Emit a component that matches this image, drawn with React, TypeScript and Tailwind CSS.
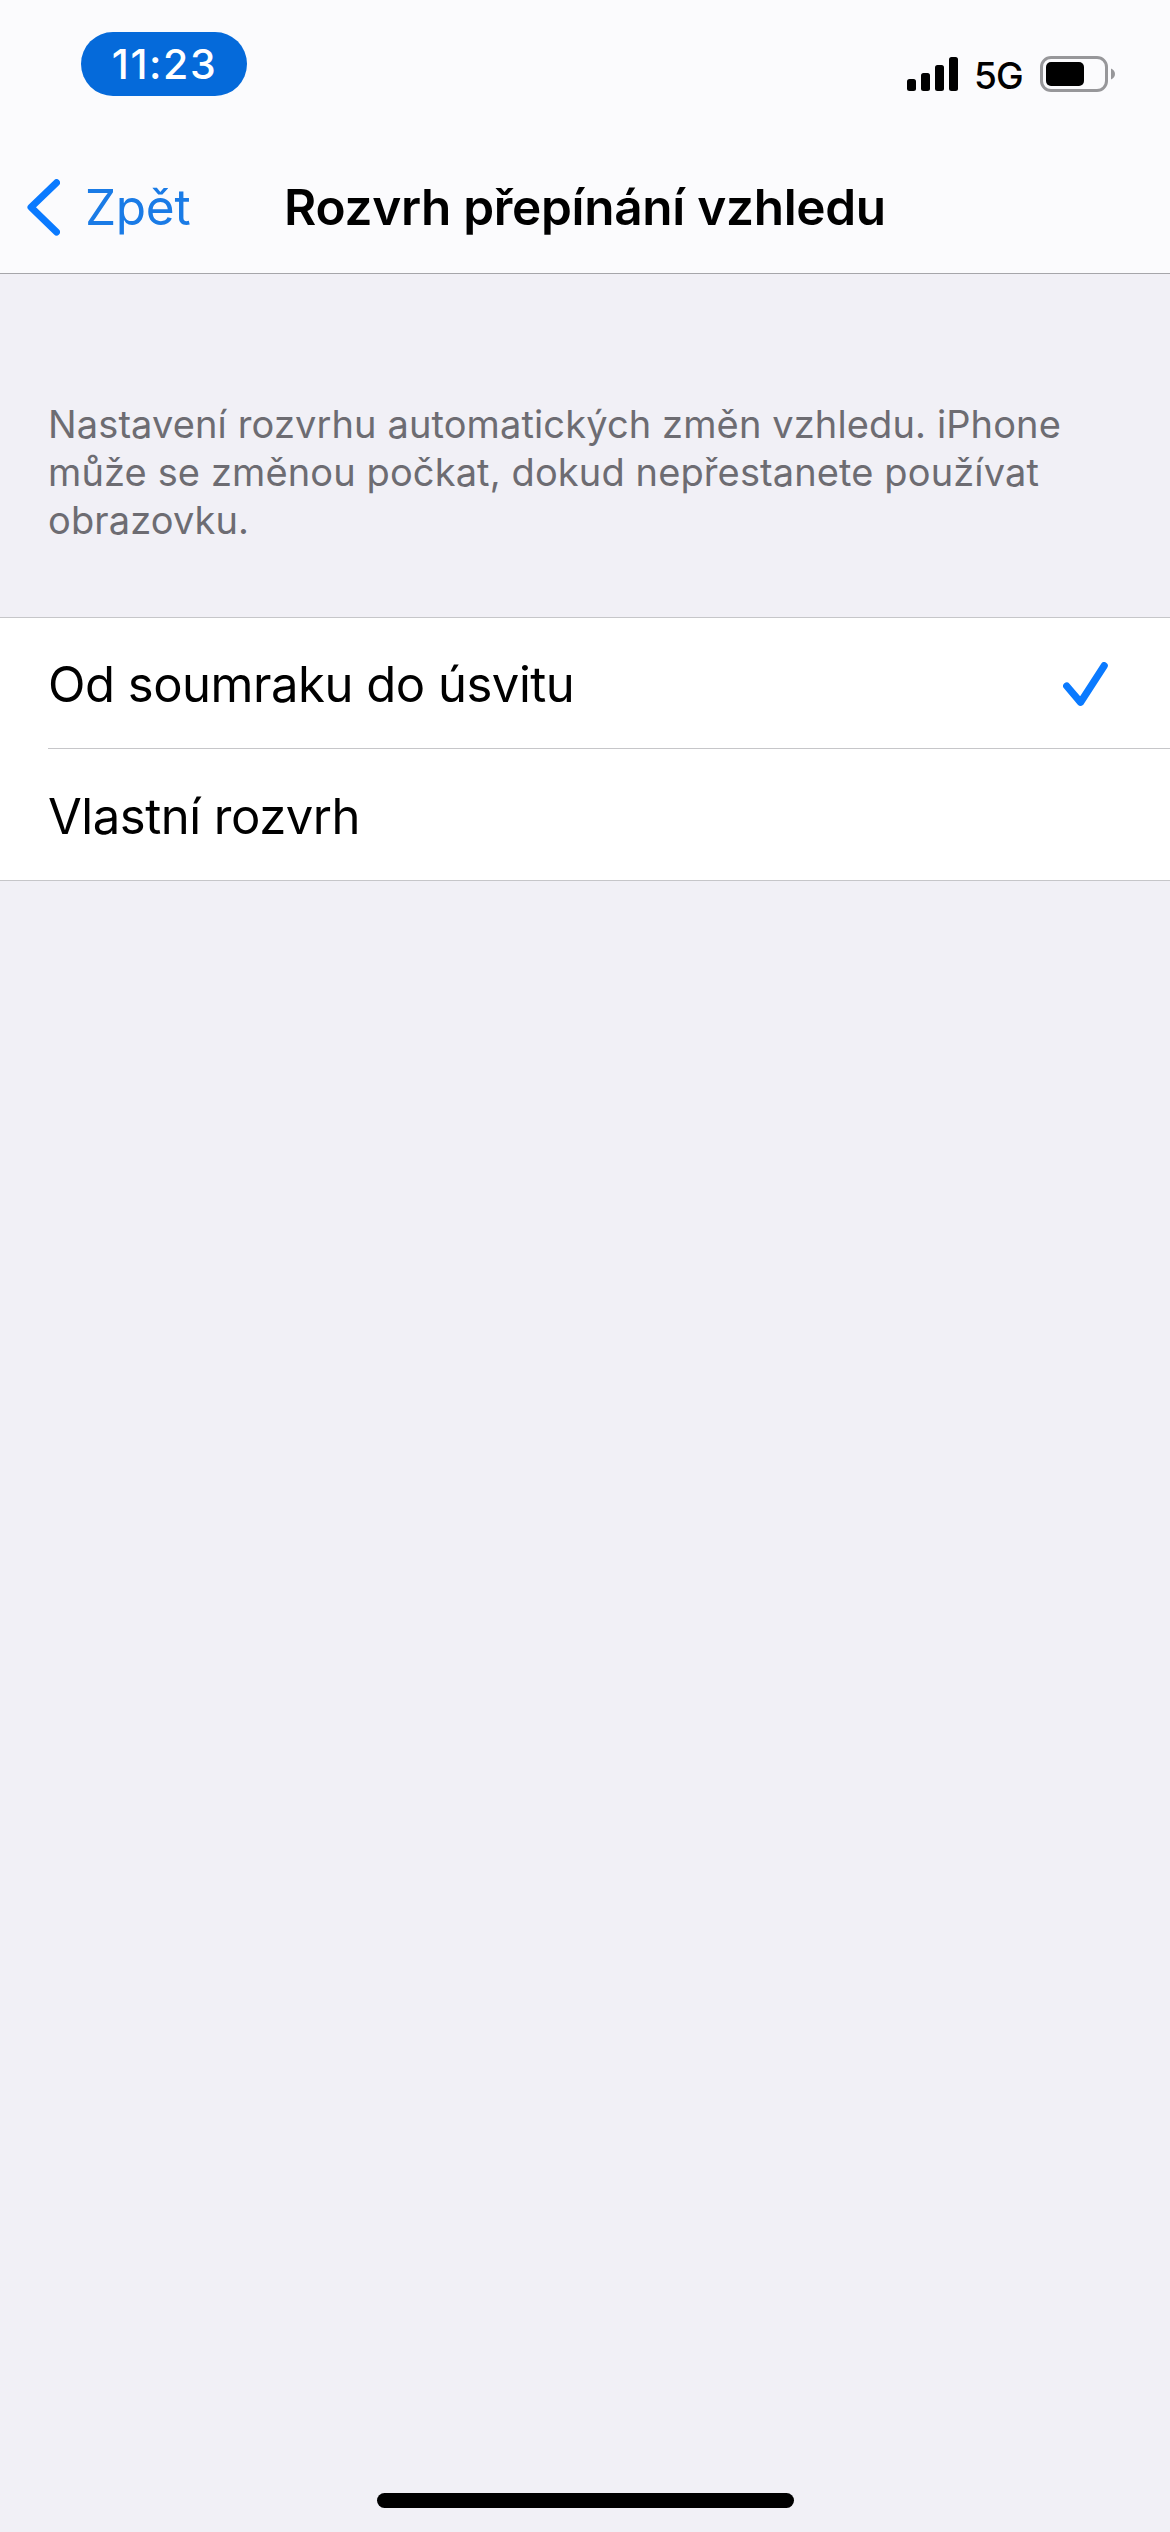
import { useState } from 'react'

const options = [
  { id: 'auto', label: 'Od soumraku do úsvitu' },
  { id: 'custom', label: 'Vlastní rozvrh' },
]

/* Signal, network and battery */
function StatusIcons() {
  return (
    <div className="flex h-9 items-center mt-14 mr-[55px]">
      <svg width="51" height="34" viewBox="0 0 51 34" fill="#000">
        <rect x="0" y="22" width="9" height="12" rx="2.5" />
        <rect x="14" y="16" width="9" height="18" rx="2.5" />
        <rect x="28" y="8" width="9" height="26" rx="2.5" />
        <rect x="42" y="0" width="9" height="34" rx="2.5" />
      </svg>
      <span className="ml-[16px] w-[50px] pt-[3px] text-[37px] leading-[45px] font-medium tracking-[-0.9px]">
        5G
      </span>
      <svg className="ml-[16px]" width="75" height="36" viewBox="0 0 75 36">
        <rect x="1.5" y="1.5" width="65" height="33" rx="9.5" fill="none" stroke="#97979a" strokeWidth="3" />
        <rect x="6" y="6" width="38" height="24" rx="5" fill="#000" />
        <path d="M71 12.5C73.500 13.500 75 15.500 75 18C75 20.500 73.500 22.500 71 23.500Z" fill="#97979a" />
      </svg>
    </div>
  )
}

function StatusBar() {
  return (
    <div className="flex h-[141px] items-start justify-between">
      <div className="mt-8 ml-[81px] flex h-16 w-[166px] justify-center rounded-full bg-[#056ada]">
        <span className="pl-[1px] text-[41px] leading-[64px] font-medium tracking-[1.6px] text-white">
          11:23
        </span>
      </div>
      <StatusIcons />
    </div>
  )
}

function NavBar() {
  return (
    <div className="grid h-[132px] grid-cols-[1fr_auto_1fr] items-center">
      <button className="flex items-center pl-[27px] text-[#0a7aff]">
        <svg width="33" height="57" viewBox="0 0 33 57" fill="none">
          <path
            d="M29.500 3.700L4 28.200L29.500 53"
            stroke="currentColor"
            strokeWidth="7"
            strokeLinecap="round"
            strokeLinejoin="round"
          />
        </svg>
        <span className="ml-[25px] text-[49.5px] leading-[60px] tracking-[-0.3px] text-[#1a7be6]">Zpět</span>
      </button>
      <h1 className="text-[49.5px] leading-[60px] font-semibold tracking-[-0.3px]">
        Rozvrh přepínání vzhledu
      </h1>
    </div>
  )
}

function Checkmark() {
  return (
    <svg width="45" height="45" viewBox="0 0 45 45" fill="none">
      <path
        d="M3.700 24L17.600 40.300L41.200 3.700"
        stroke="#0a7aff"
        strokeWidth="7.200"
        strokeLinecap="round"
        strokeLinejoin="round"
      />
    </svg>
  )
}

export default function App() {
  const [selected, setSelected] = useState('auto')

  return (
    <div className="flex h-[2532px] w-[1170px] flex-col bg-[#f1f0f6] font-['Inter',sans-serif] text-black">
      <header className="border-b border-[#a6a6aa] bg-[#fbfbfd]">
        <StatusBar />
        <NavBar />
      </header>

      <main className="flex-1 pt-[126px]">
        <p className="pl-12 text-[38px] leading-[48px] tracking-[0.12px] text-[#6d6c72]">
          Nastavení rozvrhu automatických změn vzhledu. iPhone
          <br />
          může se změnou počkat, dokud nepřestanete používat
          <br />
          obrazovku.
        </p>

        <ul className="mt-[73px] border-y border-[#c6c6c9] bg-white pl-12">
          {options.map((option) => (
            <li key={option.id} className="h-[131px] border-b border-[#c6c6c9] last:border-b-0">
              <button
                onClick={() => setSelected(option.id)}
                className="flex h-full w-full items-center justify-between pt-[2px] pr-[62px] text-left"
              >
                <span className="pt-[2px] text-[49px] leading-[60px] tracking-[-0.48px]">{option.label}</span>
                {selected === option.id && <Checkmark />}
              </button>
            </li>
          ))}
        </ul>
      </main>

      <div className="flex h-[39px] shrink-0 items-start justify-center">
        <div className="h-[15px] w-[417px] rounded-full bg-black" />
      </div>
    </div>
  )
}
